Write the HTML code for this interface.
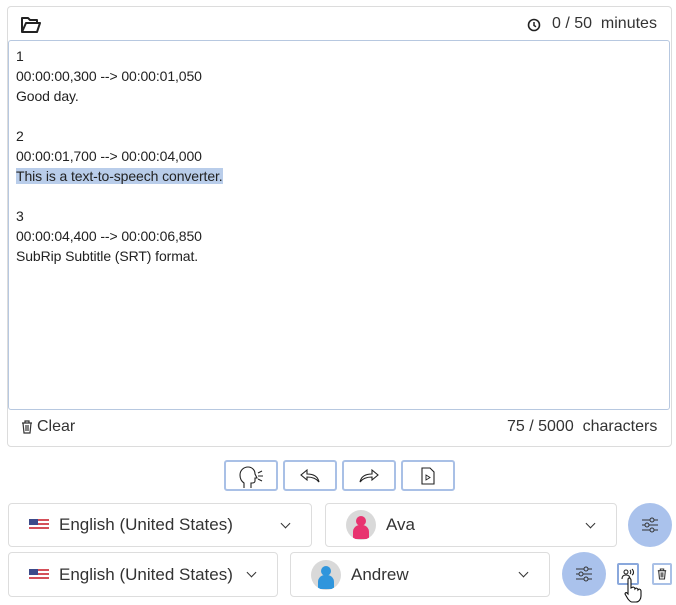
<!DOCTYPE html>
<html><head><style>
body{margin:0;width:676px;height:605px;background:#fff;font-family:"Liberation Sans",Arial,sans-serif;color:#222;position:relative;overflow:hidden}
.a{position:absolute}
.box{position:absolute;border:1px solid #dcdcdc;border-radius:4px;background:#fff}
.ta{position:absolute;left:8px;top:40px;width:662px;height:370px;border:1px solid #b7c8e0;border-radius:3px;font-size:14px;line-height:20px;padding:5px 0 0 7px;box-sizing:border-box}
.ta div{height:20px;letter-spacing:-0.1px}
.hl{background:#b9cdea}
.btn{position:absolute;top:460px;width:50px;height:27px;border:2px solid #a9c0e6;border-radius:3px;display:flex;align-items:center;justify-content:center}
.sel{position:absolute;border:1px solid #ddd;border-radius:4px;font-size:17px;color:#333;display:flex;align-items:center}
.flag{width:20px;height:12px;margin:0 10px 0 20px;background:repeating-linear-gradient(#d4505a 0 2px,#fff 2px 4px);position:relative}
.flag:before{content:"";position:absolute;left:0;top:0;width:9px;height:6px;background:#3c4a8a}
.chev{position:absolute;width:6px;height:6px;border-right:1.8px solid #333;border-bottom:1.8px solid #333;transform:rotate(45deg)}
.circ{position:absolute;width:44px;height:44px;border-radius:50%;background:#aac2ec;display:flex;align-items:center;justify-content:center}
.av{width:30px;height:30px;border-radius:50%;background:#d9d9d9;margin:0 10px 0 20px;position:relative;overflow:hidden}
</style></head><body>
<div class="box" style="left:7px;top:6px;width:663px;height:439px"></div>
<svg class="a" style="left:20px;top:15px" width="22" height="20" viewBox="0 0 22 20"><path d="M2 17V3h6l2 2h7v3M2 17h15l3-9H6L2 17z" fill="none" stroke="#222" stroke-width="2" stroke-linejoin="round"/></svg>
<svg class="a" style="left:527px;top:18px" width="14" height="14" viewBox="0 0 14 14"><circle cx="7" cy="7" r="5.5" fill="none" stroke="#222" stroke-width="1.6"/><path d="M7 4v3.5l2 1.3" fill="none" stroke="#222" stroke-width="1.5"/></svg>
<div class="a" style="left:552px;top:15px;font-size:16px;color:#333">0 / 50&nbsp; minutes</div>
<div class="ta">
<div>1</div><div>00:00:00,300 --&gt; 00:00:01,050</div><div>Good day.</div><div></div>
<div>2</div><div>00:00:01,700 --&gt; 00:00:04,000</div><div><span class="hl">This is a text-to-speech converter.</span></div><div></div>
<div>3</div><div>00:00:04,400 --&gt; 00:00:06,850</div><div>SubRip Subtitle (SRT) format.</div>
</div>
<svg class="a" style="left:21px;top:420px" width="12" height="14" viewBox="0 0 12 14"><path d="M1 3h10M4 3V1h4v2M2 3l1 10h6l1-10M5 5v6M7 5v6" fill="none" stroke="#333" stroke-width="1.2"/></svg>
<div class="a" style="left:37px;top:418px;font-size:16px;color:#333">Clear</div>
<div class="a" style="left:507px;top:418px;font-size:16px;color:#333">75 / 5000&nbsp; characters</div>
<div class="btn" style="left:224px"><svg width="30" height="24" viewBox="0 0 30 24"><path d="M8 24v-5c-3-2-4-5-4-8 0-5 4-8 8-8s7 3 7 7l2 4h-2v3c0 1-1 2-3 2h-1v5" fill="none" stroke="#222" stroke-width="1.1"/><path d="M22 9l4-2M22 12h5M22 15l4 2" stroke="#222" stroke-width="1.1"/></svg></div>
<div class="btn" style="left:283px"><svg width="22" height="16" viewBox="0 0 22 16"><path d="M8 2L2 7l6 5V9c5 0 9 1 12 5-1-5-5-8-12-8z" fill="none" stroke="#222" stroke-width="1.1"/></svg></div>
<div class="btn" style="left:342px"><svg width="22" height="16" viewBox="0 0 22 16"><path d="M14 2l6 5-6 5V9c-5 0-9 1-12 5 1-5 5-8 12-8z" fill="none" stroke="#222" stroke-width="1.1"/></svg></div>
<div class="btn" style="left:401px"><svg width="14" height="18" viewBox="0 0 14 18"><path d="M1 1h8l4 4v12H1z" fill="none" stroke="#222" stroke-width="1.1"/><path d="M5 8l4 2.5-4 2.5z" fill="none" stroke="#222" stroke-width="0.9"/></svg></div>
<div class="sel" style="left:8px;top:503px;width:302px;height:42px"><div class="flag"></div>English (United States)<div class="chev" style="left:273px;top:16px"></div></div>
<div class="sel" style="left:325px;top:503px;width:290px;height:42px"><div class="av"><div class="a" style="left:10px;top:6px;width:10px;height:10px;border-radius:50%;background:#e8336f"></div><div class="a" style="left:7px;top:15px;width:16px;height:14px;border-radius:7px 7px 0 0;background:#e8336f"></div></div>Ava<div class="chev" style="left:261px;top:16px"></div></div>
<div class="circ" style="left:628px;top:503px"><svg width="18" height="16" viewBox="0 0 18 16"><path d="M1 3h16M1 8h16M1 13h16" stroke="#333" stroke-width="1.1"/><circle cx="11" cy="3" r="2" fill="#aac2ec" stroke="#333"/><circle cx="6" cy="8" r="2" fill="#aac2ec" stroke="#333"/><circle cx="11" cy="13" r="2" fill="#aac2ec" stroke="#333"/></svg></div>
<div class="sel" style="left:8px;top:552px;width:268px;height:43px"><div class="flag"></div>English (United States)<div class="chev" style="left:239px;top:16px"></div></div>
<div class="sel" style="left:290px;top:552px;width:258px;height:43px"><div class="av"><div class="a" style="left:10px;top:6px;width:10px;height:10px;border-radius:50%;background:#2f95dc"></div><div class="a" style="left:7px;top:15px;width:16px;height:14px;border-radius:7px 7px 0 0;background:#2f95dc"></div></div>Andrew<div class="chev" style="left:229px;top:16px"></div></div>
<div class="circ" style="left:562px;top:552px"><svg width="18" height="16" viewBox="0 0 18 16"><path d="M1 3h16M1 8h16M1 13h16" stroke="#333" stroke-width="1.1"/><circle cx="11" cy="3" r="2" fill="#aac2ec" stroke="#333"/><circle cx="6" cy="8" r="2" fill="#aac2ec" stroke="#333"/><circle cx="11" cy="13" r="2" fill="#aac2ec" stroke="#333"/></svg></div>
<div class="a" style="left:617px;top:563px;width:18px;height:18px;border:2px solid #8aa8dc;border-radius:2px;display:flex;align-items:center;justify-content:center"><svg width="14" height="12" viewBox="0 0 14 12"><circle cx="5" cy="4" r="2" fill="none" stroke="#222" stroke-width="1.1"/><path d="M1 11c0-3 2-4 4-4s4 1 4 4M9 2c1 1 1 3 0 4M11 1c2 2 2 5 0 6" fill="none" stroke="#222" stroke-width="1.1"/></svg></div>
<svg class="a" style="left:624px;top:577px" width="18" height="26" viewBox="0 0 18 26"><path d="M5 1c1 0 2 1 2 2v8l2-1c1 0 2 1 2 2l1-1c1 0 2 1 2 2l1-1c1 0 2 1 2 2v5c0 3-2 6-5 6H8c-2 0-3-2-4-3l-3-5c0-1 1-2 2-1l1 1V3c0-1 0-2 1-2z" fill="#fff" stroke="#111" stroke-width="1.1"/></svg>
<div class="a" style="left:652px;top:563px;width:16px;height:18px;border:2px solid #a9c0e6;border-radius:2px;display:flex;align-items:center;justify-content:center"><svg width="10" height="12" viewBox="0 0 12 14"><path d="M1 3h10M4 3V1h4v2M2 3l1 10h6l1-10M5 5v6M7 5v6" fill="none" stroke="#333" stroke-width="1.3"/></svg></div>
</body></html>
